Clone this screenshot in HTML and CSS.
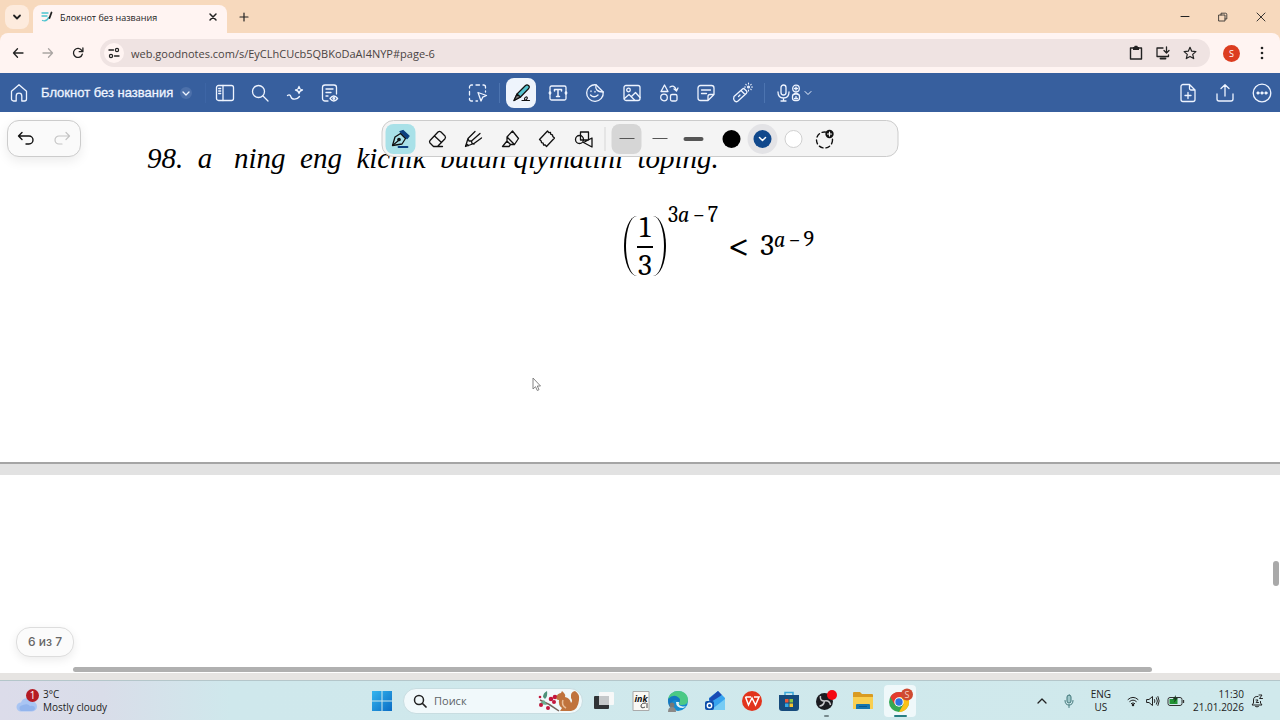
FILE: index.html
```html
<!DOCTYPE html>
<html lang="ru">
<head>
<meta charset="utf-8">
<meta name="viewport" content="width=device-width, initial-scale=1">
<title>Блокнот без названия</title>
<link rel="stylesheet" href="styles.css">
</head>
<body>
<header class="browser">
  <div class="tabstrip">
    <button class="tab-search" aria-label="Search tabs"><svg width="10" height="10" viewBox="0 0 10 10" class="stroke"><path d="M2 3.500 5 6.500 8 3.500" stroke-width="1.800"/></svg></button>
    <div class="tab">
      <svg width="12" height="12" viewBox="0 0 12 12" fill="none" stroke-linecap="round"><path d="M1 2h6M1 5h5" stroke="#4bc3cf" stroke-width="1.300"/><path d="M1.500 9.500c3.500 1 5 0 6-3" stroke="#4bc3cf" stroke-width="1.300"/><path d="M10.500 1.500 8.500 7" stroke="#222" stroke-width="1.800"/></svg>
      <span class="tab-title">Блокнот без названия</span>
      <button class="plain" aria-label="Close tab"><svg width="10" height="10" viewBox="0 0 10 10" class="stroke"><path d="M2 2l6 6M8 2 2 8" stroke-width="1.500"/></svg></button>
    </div>
    <button class="plain new-tab" aria-label="New tab"><svg width="12" height="12" viewBox="0 0 12 12" class="stroke"><path d="M6 2v8M2 6h8" stroke-width="1.200"/></svg></button>
    <div class="window-buttons">
      <button class="plain" aria-label="Minimize"><svg width="10" height="10" viewBox="0 0 10 10" class="stroke"><path d="M1 4.500h8" stroke-width="1"/></svg></button>
      <button class="plain" aria-label="Restore"><svg width="10" height="10" viewBox="0 0 10 10" class="stroke"><path d="M1 3h6v6H1zM3 3V1.200h4.500a1.300 1.300 0 0 1 1.300 1.300V7H7" stroke-width=".8"/></svg></button>
      <button class="plain" aria-label="Close"><svg width="10" height="10" viewBox="0 0 10 10" class="stroke"><path d="M1 1l8 8M9 1 1 9" stroke-width=".9"/></svg></button>
    </div>
  </div>
  <div class="toolbar">
    <button class="plain nav" aria-label="Back"><svg width="12" height="12" viewBox="0 0 12 12" class="stroke"><path d="M11 6H1.500M5.500 1.700 1.500 6l4 4.300" stroke-width="1.300"/></svg></button>
    <button class="plain nav muted" aria-label="Forward"><svg width="12" height="12" viewBox="0 0 12 12" class="stroke"><path d="M1 6h9.500M6.500 1.700l4 4.300-4 4.300" stroke-width="1.300"/></svg></button>
    <button class="plain nav" aria-label="Reload"><svg width="12" height="12" viewBox="0 0 12 12" class="stroke"><path d="M10.300 7.200A4.500 4.500 0 1 1 9.700 3.400L10.700 4.500M10.900 1v3.700H7.200" stroke-width="1.300"/></svg></button>
    <div class="omnibox">
      <button class="site-info" aria-label="Site information"><svg width="12" height="12" viewBox="0 0 12 12" class="stroke"><path d="M1 3h4.500M6.500 9H11" stroke-width="1.400"/><circle cx="9" cy="3" r="1.600" stroke-width="1.200"/><circle cx="3" cy="9" r="1.600" stroke-width="1.200"/></svg></button>
      <input class="url" aria-label="Address" value="web.goodnotes.com/s/EyCLhCUcb5QBKoDaAI4NYP#page-6">
      <button class="plain" aria-label="Clipboard"><svg width="14" height="16" viewBox="0 0 14 16" class="stroke"><path d="M1.500 3h11v11h-11z" stroke-width="1.400"/><path d="M4 2h6v3H4z" fill="currentColor" stroke="none"/><path d="M6 1.500h2" stroke-width="1.500"/></svg></button>
      <button class="plain" aria-label="Install app"><svg width="14" height="14" viewBox="0 0 14 14" class="stroke"><path d="M7 2H1v8.500h11.500V9M10.500 1v5.500M8 4.500 10.500 7 13 4.500" stroke-width="1.300"/><path d="M4.500 12.500h5" stroke-width="1.800"/></svg></button>
      <button class="plain" aria-label="Bookmark"><svg width="14" height="14" viewBox="0 0 14 14" class="stroke"><path d="M7 1.300l1.700 3.900 4.200.4-3.200 2.800 1 4.200L7 10.400l-3.700 2.200 1-4.200L1.100 5.600l4.200-.4z" stroke-width="1.200"/></svg></button>
    </div>
    <button class="avatar" aria-label="Profile">S</button>
    <button class="plain more" aria-label="Menu"><svg width="4" height="14" viewBox="0 0 4 14" fill="currentColor"><circle cx="2" cy="2" r="1.300"/><circle cx="2" cy="7" r="1.300"/><circle cx="2" cy="12" r="1.300"/></svg></button>
  </div>
</header>

<nav class="appbar">
  <div class="app-left">
    <button class="tool home" aria-label="Home"><svg width="20" height="20" viewBox="0 0 20 20" class="stroke"><path d="M2.500 8.300 10 1.800l7.500 6.500V16a2 2 0 0 1-2 2h-2.700v-5a2.800 2.800 0 0 0-5.600 0v5H4.500a2 2 0 0 1-2-2z"/></svg></button>
    <button class="doc-title"><span>Блокнот без названия</span><span class="doc-arrow"><svg width="10" height="10" viewBox="0 0 10 10" class="stroke"><path d="M2 4l3 3 3-3"/></svg></span></button>
    <span class="bar-line faint"></span>
    <div class="app-actions">
      <button class="tool" aria-label="Sidebar"><svg width="20" height="20" viewBox="0 0 20 20" class="stroke"><rect x="1.500" y="2.500" width="17" height="15" rx="2"/><path d="M8 2.500v15M3.700 5.500h2M3.700 8h2M3.700 10.500h2"/></svg></button>
      <button class="tool" aria-label="Search"><svg width="20" height="20" viewBox="0 0 20 20" class="stroke"><circle cx="8.500" cy="8.500" r="6"/><path d="M13 13l5 5"/></svg></button>
      <button class="tool" aria-label="Assistant"><svg width="20" height="20" viewBox="0 0 20 20" class="stroke"><path d="M2.500 12.500c2-1.500 3 0 3.500 1.500 1 3 6 3 8.500-.5M14 3.500q.5 3 3.500 3.500-3 .5-3.500 3.500-.5-3-3.500-3.500 3-.5 3.500-3.500z"/></svg></button>
      <button class="tool" aria-label="Document view"><svg width="20" height="20" viewBox="0 0 20 20" class="stroke"><path d="M8 18H5a2.500 2.500 0 0 1-2.500-2.500v-11A2.500 2.500 0 0 1 5 2h9a2.500 2.500 0 0 1 2.500 2.500V11M6 6h7M6 9.500h5M6 13h2"/><path d="M10 15.500q3.800-5 7.600 0-3.800 5-7.600 0z"/><circle cx="13.800" cy="15.500" r=".8"/></svg></button>
    </div>
  </div>
  <div class="app-center">
    <button class="tool" aria-label="Select"><svg width="20" height="20" viewBox="0 0 20 20" class="stroke"><path d="M1.500 5V4A2 2 0 0 1 3.500 2h1M8 2h3.500M15 2h.5a2 2 0 0 1 2 2v1M1.500 8.500V12M1.500 15.500A2 2 0 0 0 3.500 18h1M8 18h1.500M17.500 8v1"/><path d="M10 9.500l8.500 3-3.800 1.700-1.700 3.800z"/></svg></button>
    <span class="bar-line"></span>
    <div class="mode-list">
      <button class="tool active" aria-label="Pen"><svg width="22" height="22" viewBox="0 0 22 22" class="stroke"><path d="M4 18.500 7 12 15.500 3.500q1.500-1.300 3 0t.2 3L10.500 15z" fill="#55c3cf" stroke-width="1.200"/><path d="M4 18.500 7 12l3.500 3z" fill="#777" stroke-width="1.200"/><path d="M12 18.500h2c4-.5 4-4 2-3.500s-2 3.500 0 3.500h3.500" stroke-width="1.200"/></svg></button>
      <button class="tool" aria-label="Text"><svg width="20" height="20" viewBox="0 0 20 20" class="stroke"><path d="M2 7V4.500a1.500 1.500 0 0 1 1.500-1.500h13A1.500 1.500 0 0 1 18 4.500V7M2 13v2.500A1.500 1.500 0 0 0 3.500 17h13a1.500 1.500 0 0 0 1.500-1.500V13"/><path d="M2 8v4M18 8v4M6.500 8V6.500h7V8M10 6.500v7M8.500 13.500h3" stroke-width="1.500"/><circle cx="2" cy="10" r=".8"/><circle cx="18" cy="10" r=".8"/></svg></button>
      <button class="tool" aria-label="Stickers"><svg width="20" height="20" viewBox="0 0 20 20" class="stroke"><path d="M11 1.800A8.300 8.300 0 1 0 18.200 9z"/><path d="M11 1.800C10 6 12 9 18.200 9M6 8.500v-.7M10 9v-.7M5.500 12q3.500 3.500 7.500 0"/></svg></button>
      <button class="tool" aria-label="Image"><svg width="20" height="20" viewBox="0 0 20 20" class="stroke"><rect x="2" y="2.500" width="16" height="15" rx="2"/><circle cx="6.500" cy="7" r="1.800"/><path d="M2.500 15.500l4.500-4 5.500 5.500M9.500 13.500l4-4 4.500 5"/></svg></button>
      <button class="tool" aria-label="Elements"><svg width="20" height="20" viewBox="0 0 20 20" class="stroke"><path d="M5.500 2 9 8.500H2zM11 4q4-3 6.500 3.500M15 6l2.500 2 1.500-3"/><circle cx="5" cy="14.500" r="3.300"/><rect x="11.500" y="11.500" width="6.500" height="6.500" rx="1.500"/></svg></button>
      <button class="tool" aria-label="Note"><svg width="20" height="20" viewBox="0 0 20 20" class="stroke"><path d="M12 17.500H4.500a2.500 2.500 0 0 1-2.500-2.500V5a2.500 2.500 0 0 1 2.500-2.500h11A2.500 2.500 0 0 1 18 5v6.500zM18 11.500h-4a2 2 0 0 0-2 2v4M5.500 7h9M5.500 10.500h5"/></svg></button>
      <button class="tool" aria-label="Laser pointer"><svg width="22" height="22" viewBox="0 0 22 22" class="stroke"><path d="M2 14.500 10.500 7q1-1 2.200.2l1.800 1.800q1 1 0 2.200L6 19q-2 1.500-3.500-.2T2 14.500zM9 8.500l4 4M6.500 14.500l1.500-1.500"/><path d="M16.500 1v1M16.500 8v1M12.500 5h1M19.500 5h1M13.800 2.300l.5.500M19.200 2.300l-.5.500M19.200 7.700l-.5-.5" stroke-width="1.100"/><circle cx="16.500" cy="5" r=".9"/></svg></button>
    </div>
    <span class="bar-line"></span>
    <button class="tool audio" aria-label="Record audio"><svg width="26" height="20" viewBox="0 0 26 20" class="stroke"><rect x="5" y="2" width="5" height="10" rx="2.500"/><path d="M2 9q0 6 5.500 6T13 9M7.500 15v3M5 18h5"/><circle cx="20" cy="5.500" r="3.300"/><path d="M18.500 5.500h3M20 4v3"/><rect x="16.500" y="11" width="7" height="6.500" rx="2.500"/><path d="M18 11.500q2-3 4 0M20 13.500v2M18.500 15.500h3"/></svg><svg width="10" height="10" viewBox="0 0 10 10" class="stroke"><path d="M2 3.500 5 6.500 8 3.500" stroke-width="1"/></svg></button>
  </div>
  <div class="app-right">
    <button class="tool" aria-label="Add page"><svg width="20" height="20" viewBox="0 0 20 20" class="stroke"><path d="M11.500 1.500H5A2 2 0 0 0 3 3.500v13a2 2 0 0 0 2 2h10a2 2 0 0 0 2-2V7zv4A1.500 1.500 0 0 0 13 7h4M10 9.500v6M7 12.500h6"/></svg></button>
    <button class="tool" aria-label="Share"><svg width="20" height="20" viewBox="0 0 20 20" class="stroke"><path d="M2 11v5a2 2 0 0 0 2 2h12a2 2 0 0 0 2-2v-5M10 13V2M6 5.500 10 1.800l4 3.700"/></svg></button>
    <button class="tool" aria-label="More"><svg width="20" height="20" viewBox="0 0 20 20" class="stroke"><circle cx="10" cy="10" r="8.800"/><g fill="currentColor" stroke-width=".5"><circle cx="6" cy="10" r="1.300"/><circle cx="10" cy="10" r="1.300"/><circle cx="14" cy="10" r="1.300"/></g></svg></button>
  </div>
</nav>

<main class="workspace">
  <section class="page first">
    <p class="question">98.  a   ning  eng  kichik  butun qiymatini  toping.</p>
    <div class="formula">
      <span class="paren left"></span>
      <span class="fraction"><span>1</span><span class="denominator">3</span></span>
      <span class="paren right"></span>
      <span class="exponent high">3<i>a</i><span class="minus">−</span>7</span>
      <span class="less">&lt;</span>
      <span>3</span>
      <span class="exponent"><i>a</i><span class="minus">−</span>9</span>
    </div>
  </section>
  <section class="page second"></section>

  <div class="history">
    <button class="plain" aria-label="Undo"><svg width="18" height="18" viewBox="0 0 18 18" class="stroke"><path d="M1.500 6H12a4 4 0 0 1 0 8H9M5 2.500 1.500 6 5 9.500" stroke-width="1.400"/></svg></button>
    <button class="plain muted" aria-label="Redo"><svg width="18" height="18" viewBox="0 0 18 18" class="stroke"><path d="M16.500 6H6a4 4 0 0 0 0 8h3M13 2.500 16.500 6 13 9.500" stroke-width="1.200"/></svg></button>
  </div>

  <div class="pen-panel">
    <div class="pens">
      <button class="pen chosen" aria-label="Fountain pen"><svg width="20" height="20" viewBox="0 0 20 20" class="stroke"><path d="M9.500 2.500 16.500 9.500l2-2.500L12.500 1.500z" fill="#0b3f7f" stroke="#0b3f7f"/><path d="M2 16.500 4.500 8l5.500-3.500 5 5L11.500 15z"/><path d="M2.500 16l5-4"/><circle cx="8.500" cy="10.500" r="1.200" fill="#111"/><path d="M8 18h9" stroke="#0b3f7f" stroke-width="1.800"/></svg></button>
      <button class="pen" aria-label="Eraser"><svg width="20" height="20" viewBox="0 0 20 20" class="stroke"><path d="M2.500 11.500 10.500 3q1.500-1.300 3 0l4 4q1 1.500 0 2.700L10 17.500H6L2.500 14q-1-1.300 0-2.500zM7 7l7 6.500M6 17.500h9"/></svg></button>
      <button class="pen" aria-label="Pencil"><svg width="20" height="20" viewBox="0 0 20 20" class="stroke"><path d="M11.500 2.500 4.500 9.500 2 17.500l8.500-3 7.500-5.500M8 12l8.500-7.500M4.500 9.500l1 2.500L8 12l.5 2.500 2 .5M3 15l2 1.500"/></svg></button>
      <button class="pen" aria-label="Highlighter"><svg width="20" height="20" viewBox="0 0 20 20" class="stroke"><path d="M12 2 6.500 8v4L2 17.500h6.500l1.500-2h4L18 9.500zM6.500 8l7.500 7.500M6.500 12l3.500 3.500"/></svg></button>
      <button class="pen" aria-label="Tape"><svg width="20" height="20" viewBox="0 0 20 20" class="stroke"><path d="M11 2l1.300 1.700 1.700-.2.300 1.900 1.700.4.300 1.700L18 9l-8 8.500-1.300-1.700-1.700.2-.3-1.900-1.700-.4-.3-1.700L3 10.500z"/></svg></button>
      <button class="pen" aria-label="Shapes"><svg width="20" height="20" viewBox="0 0 20 20" class="stroke"><path d="M7 3h8v8H7zM18.500 9v9L10 13.500z"/><circle cx="6" cy="10.500" r="4"/></svg></button>
    </div>
    <span class="panel-line"></span>
    <div class="widths">
      <button class="pen picked" aria-label="Thin"><span class="line"></span></button>
      <button class="pen" aria-label="Medium"><span class="line"></span></button>
      <button class="pen" aria-label="Thick"><span class="line thick"></span></button>
    </div>
    <div class="colours">
      <button class="pen" aria-label="Black"><span class="dot black"></span></button>
      <button class="pen ring" aria-label="Blue"><span class="dot blue"><svg width="10" height="10" viewBox="0 0 10 10" class="stroke"><path d="M2 3.500 5 6.500 8 3.500" stroke-width="1.500"/></svg></span></button>
      <button class="pen" aria-label="White"><span class="dot white"></span></button>
      <button class="pen" aria-label="Add colour"><svg width="20" height="20" viewBox="0 0 20 20" class="stroke"><circle cx="10" cy="11" r="8" stroke-dasharray="4 3" stroke-width="1.400"/><circle cx="15" cy="5" r="4.200" fill="#111" stroke="none"/><path d="M15 3v4M13 5h4" stroke="#fff" stroke-width="1.200"/></svg></button>
    </div>
  </div>

  <svg class="cursor" width="10" height="15" viewBox="0 0 10 15"><path d="M1 1v11l2.500-2.300L5.300 13.500l1.700-.8-1.700-3.700H8.500z" fill="#fff" stroke="#777" stroke-width=".9"/></svg>
  <div class="page-count">6 из 7</div>
  <div class="scroll-x"></div>
  <div class="scroll-y"></div>
</main>

<footer class="taskbar">
  <button class="weather">
    <svg width="26" height="26" viewBox="0 0 26 26"><path d="M6 23.500a4.500 4.500 0 0 1 0-9 6 6 0 0 1 11-1 5 5 0 0 1 0 10z" fill="#a9c5f3"/><path d="M5 22q-2-4 3-5 5-2 7 1 5-1 5 3-1 2-4 2H6z" fill="#86aaea" opacity=".6"/><circle cx="17.500" cy="7.500" r="6.500" fill="#b51b24"/><text x="17.500" y="11" font-size="10" fill="#fff" text-anchor="middle">1</text></svg>
    <span class="weather-text"><span>3°C</span><span>Mostly cloudy</span></span>
  </button>
  <div class="task-center">
    <button class="task" aria-label="Start"><svg width="20" height="20" viewBox="0 0 20 20"><defs><linearGradient id="win" x1="0" y1="0" x2="1" y2="1"><stop offset="0" stop-color="#35b6ef"/><stop offset="1" stop-color="#0a6cc4"/></linearGradient></defs><path d="M0 0h9.500v9.500H0zM10.500 0H20v9.500h-9.500zM0 10.500h9.500V20H0zM10.500 10.500H20V20h-9.500z" fill="url(#win)"/></svg></button>
    <label class="search"><svg width="14" height="14" viewBox="0 0 14 14" class="stroke"><circle cx="6" cy="6" r="4.500" stroke-width="1.500"/><path d="M9.500 9.500 13 13" stroke-width="1.700"/></svg><input class="search-input" type="text" placeholder="Поиск" aria-label="Поиск"><svg width="42" height="22" viewBox="0 0 42 22"><path d="M2 10Q12 14 21 21" stroke="#75645b" stroke-width="1.500" fill="none"/><path d="M5 7Q5 3 9 1q1 5-2 8z" fill="#4e927a"/><path d="M1 14l5-4 3 5z" fill="#6eaf91"/><g fill="#c3173c"><circle cx="3" cy="15" r="2"/><circle cx="10" cy="18" r="2"/><circle cx="13" cy="9" r="2.300"/><circle cx="17" cy="7" r="2.300"/><circle cx="16" cy="12" r="2"/><circle cx="2" cy="7" r="1.300"/></g><path d="M19 6q0-2 4-3l1-2 2 2q2 2 1 4 5 1 6 6 2-2 0-5-1-6 4-7 5 3 4 9-1 10-8 11H22l2-3q-4-3-3-8-4 0-2-4z" fill="#c0733d"/><path d="M25 10q-2 5 3 8" stroke="#e9bd98" stroke-width="1.500" fill="none"/></svg></label>
    <div class="apps">
      <button class="task" aria-label="Task view"><svg width="20" height="20" viewBox="0 0 20 20"><rect x="5" y="1" width="15" height="13" rx="1" fill="#f7f8f8"/><rect y="5" width="15" height="13" rx="1" fill="#303336"/><path d="M5 5h10v9H5z" fill="#c5c8ca"/></svg></button>
      <button class="task" aria-label="Ink"><svg width="18" height="20" viewBox="0 0 18 20"><path d="M1 .5h16v19H1z" fill="#faf8f4" stroke="#aaa"/><text x="9" y="11" font-size="9" font-style="italic" font-weight="bold" text-anchor="middle" fill="#111">ink</text><path d="M14 12q-5 0-5 3 0 3 4 1M15 12v5" stroke="#444" fill="none"/></svg></button>
      <button class="task" aria-label="Edge"><svg width="22" height="22" viewBox="0 0 22 22"><circle cx="11" cy="11" r="10" fill="#158bd0"/><path d="M1 11C1-2 21-2 21 10q0 5-6 5-3 0-3-2 1-1 1-2 0-4-5-4-5 0-7 4z" fill="#4bc985"/><path d="M1 9q6-6 11-1 2 2 0 4-5-5-8 2l2 6Q1 17 1 9z" fill="#1478c1"/><path d="M9 12q0 6 7 6l4-2q-3 1-6 0-3-1-2-4z" fill="#e3f3f5"/><circle cx="5" cy="15" r="2.500" fill="#777"/><path d="M1 22q0-5 4-5t4 5z" fill="#8b8987"/></svg></button>
      <button class="task" aria-label="Outlook"><svg width="22" height="22" viewBox="0 0 22 22"><path d="M5 8 14 1l6 7v12H5z" fill="#2386dc"/><path d="M5 9 14 1l4 4-9 9z" fill="#1a4bb4"/><path d="M7 12 18 5l3 3v12H6z" fill="#37a4ef"/><path d="M7 20 21 9v11z" fill="#77ccf4"/><rect x="1" y="11" width="9" height="9" rx="2" fill="#0c4eaa"/><circle cx="5.500" cy="15.500" r="2.200" fill="none" stroke="#fff" stroke-width="1.400"/></svg></button>
      <button class="task" aria-label="WPS Office"><svg width="20" height="20" viewBox="0 0 20 20"><circle cx="10" cy="10" r="10" fill="#e2341d"/><path d="M3.500 6l3 8L10 7l3.500 7L17 6h-5M3.500 6H9" fill="none" stroke="#fff" stroke-width="1.500"/></svg></button>
      <button class="task" aria-label="Store"><svg width="20" height="20" viewBox="0 0 20 20"><path d="M6 5V1.500h8V5" fill="none" stroke="#39a8db" stroke-width="1.500"/><path d="M0 4h20v13a3 3 0 0 1-3 3H3a3 3 0 0 1-3-3z" fill="#164b7c"/><path d="M6 8h3.500v3.500H6z" fill="#ee5637"/><path d="M10.500 8H14v3.500h-3.500z" fill="#8bc343"/><path d="M6 12.500h3.500V16H6z" fill="#35a9e5"/><path d="M10.500 12.500H14V16h-3.500z" fill="#f7c531"/></svg></button>
      <button class="task running" aria-label="OBS Studio"><svg width="22" height="22" viewBox="0 0 22 22"><circle cx="9.500" cy="11.500" r="8.500" fill="#1b1b20"/><path d="M9.500 11q-5 0-4-5M9.500 11q5-1 6 4M9.500 11q-1 5-5 5" fill="none" stroke="#c8c8cc" stroke-width="1.500"/><circle cx="17" cy="5" r="5" fill="#f50812"/></svg></button>
      <button class="task" aria-label="File Explorer"><svg width="20" height="20" viewBox="0 0 20 20"><path d="M0 2q0-1 1-1h6l2 2h10q1 0 1 1v5H0z" fill="#d99b22"/><path d="M0 6h20v12H0z" fill="#f9cf51"/><path d="M3 18v-4q0-1 1-1h12q1 0 1 1v4z" fill="#1675ae"/><path d="M6 15.500h8" stroke="#0b588d"/></svg></button>
      <button class="task current" aria-label="Google Chrome"><svg width="26" height="28" viewBox="0 0 26 28"><circle cx="12" cy="15" r="10" fill="#34a853"/><path d="M3.300 10A10 10 0 0 1 20.700 10H12l-4.400 7.500z" fill="#e33b2e"/><path d="M20.700 10A10 10 0 0 1 12 25l4.400-7.500L12 10z" fill="#fbc116"/><circle cx="12" cy="15" r="4.700" fill="#fff"/><circle cx="12" cy="15" r="3.700" fill="#2d73e1"/><circle cx="20" cy="7.500" r="6" fill="#cf4a31"/><text x="20" y="11" font-size="9" fill="#f3cfc5" text-anchor="middle">S</text></svg></button>
    </div>
  </div>
  <div class="tray">
    <button class="plain" aria-label="Hidden icons"><svg width="10" height="10" viewBox="0 0 10 10" class="stroke"><path d="M1 7l4-4 4 4"/></svg></button>
    <button class="plain mic" aria-label="Microphone"><svg width="10" height="14" viewBox="0 0 10 14" class="stroke"><rect x="3" y="1" width="4" height="8" rx="2" fill="#9dc7c9" stroke-width="1"/><path d="M1 6.500q0 4.500 4 4.500t4-4.500M5 11v2.500" stroke-width="1"/></svg></button>
    <button class="language"><span>ENG</span><span>US</span></button>
    <div class="status">
      <svg width="12" height="12" viewBox="0 0 12 12" class="stroke"><path d="M1 4.500q5-4.500 10 0M2.700 6.500q3.300-3 6.600 0M4.300 8.500q1.700-1.500 3.400 0" stroke-width="1"/><circle cx="6" cy="10" r=".6"/></svg>
      <svg width="14" height="12" viewBox="0 0 14 12" class="stroke"><path d="M1 4.500h2L6.500 1.500v9L3 7.500H1zM8.500 4.500q1 1.500 0 3M10.500 2.800q2 3.200 0 6.400M12 1.500q2.500 4.500 0 9" stroke-width="1"/></svg>
      <svg width="18" height="12" viewBox="0 0 18 12"><rect x="1" y="2.500" width="14" height="8" rx="2" fill="none" stroke="#333"/><path d="M2.500 4h8v5h-8z" fill="#239435"/><path d="M16.500 5v3" stroke="#333" stroke-width="1.300"/><path d="M9 0 5.500 4.500H8L6.500 8 11 3H8.500z" fill="#173c1e"/></svg>
    </div>
    <button class="clock"><span>11:30</span><span>21.01.2026</span></button>
    <button class="plain" aria-label="Notifications"><svg width="12" height="14" viewBox="0 0 12 14" class="stroke"><path d="M7 2.500Q2.500 2 2.500 6v3L1 11h10L9.500 9V7.500M4.500 12.500q1.500 1 3 0M8 1h3L8.500 4.500h3M5 6h2L5.200 8.500H7.500" stroke-width="1"/></svg></button>
  </div>
</footer>
</body>
</html>
```
FILE: styles.css
```css
* { box-sizing: border-box; }

body {
  margin: 0;
  height: 100vh;
  display: flex;
  flex-direction: column;
  overflow: hidden;
  background: #fff;
  color: #222;
  font-family: "Open Sans", "Noto Sans", sans-serif;
  font-size: 11px;
}

button, input {
  margin: 0;
  padding: 0;
  border: 0;
  background: none;
  color: inherit;
  font: inherit;
}

svg { display: block; flex: none; }

.stroke {
  fill: none;
  stroke: currentColor;
  stroke-width: 1.3;
  stroke-linecap: round;
  stroke-linejoin: round;
}

.plain, .tool, .pen, .task, .site-info, .avatar, .tab-search {
  display: flex;
  align-items: center;
  justify-content: center;
  flex: none;
}

/* Browser frame */
.browser { background: #f7d9bd; }

.tabstrip {
  display: flex;
  align-items: center;
  height: 33px;
  padding-left: 5px;
}

.tab-search {
  width: 24px;
  height: 24px;
  border-radius: 8px;
  background: #fdebdd;
}

.tab {
  display: flex;
  align-items: center;
  align-self: flex-end;
  width: 194px;
  height: 28px;
  margin-left: 4px;
  padding: 0 9px 4px 8px;
  border-radius: 8px 8px 0 0;
  background: #fff4f2;
}

.tab-title { flex: 1; margin-left: 7px; font-size: 9px; white-space: nowrap; }
.new-tab { margin-left: 11px; }

.window-buttons {
  display: flex;
  gap: 28px;
  margin-left: auto;
  padding-right: 14px;
}

.toolbar {
  display: flex;
  align-items: center;
  height: 40px;
  padding: 0 12px;
  border-radius: 8px 8px 0 0;
  background: #fff4f2;
}

.nav { width: 12px; margin-right: 18px; }
.muted { color: #aaa5a3; }

.omnibox {
  display: flex;
  align-items: center;
  flex: 1;
  gap: 13px;
  height: 28px;
  margin-left: -2px;
  padding: 0 13px 0 4px;
  border-radius: 14px;
  background: #efe3e2;
}

.site-info {
  width: 20px;
  height: 20px;
  border-radius: 10px;
  background: #fff4f2;
}

.url { flex: 1; min-width: 0; margin-left: -6px; font-size: 11px; color: #4a4342; }

.avatar {
  width: 17px;
  height: 17px;
  margin-left: 13px;
  border-radius: 50%;
  background: #dc3d20;
  color: #fff;
  font-size: 9px;
}

.more { margin: 0 4px 0 20px; }

/* Application bar */
.appbar {
  display: grid;
  grid-template-columns: 1fr auto 1fr;
  align-items: center;
  height: 39px;
  background: #375f9e;
  color: #eef4ff;
}

.tool { width: 30px; height: 30px; border-radius: 8px; }
.app-left, .app-center, .app-right, .mode-list, .app-actions { display: flex; align-items: center; }
.app-left { padding-left: 4px; }
.app-actions { gap: 5px; margin-left: 4px; }
.app-center { gap: 6px; }
.mode-list { gap: 7px; }
.app-right { justify-content: flex-end; gap: 7px; padding-right: 3px; }

.doc-title {
  display: flex;
  align-items: center;
  gap: 7px;
  margin: 0 13px 0 7px;
  font-family: "Liberation Sans", Arial, sans-serif;
  font-size: 13px;
  -webkit-text-stroke: 0.3px currentColor;
  white-space: nowrap;
}

.doc-arrow { padding: 1px; border-radius: 50%; background: #4c70aa; }
.bar-line { width: 1px; height: 20px; background: #4c74b0; }
.bar-line.faint { background: #3d65a5; }
.tool.active { background: #eef4fc; color: #111; }
.tool.audio { width: 46px; gap: 1px; }

/* Document */
.workspace {
  position: relative;
  flex: 1;
  display: flex;
  flex-direction: column;
  gap: 11px;
  min-height: 0;
  overflow: hidden;
  background: #e2e2e2;
  border-bottom: 7px solid #e6e4e2;
}

.page { background: #fff; }

.first {
  padding-top: 29px;
  height: 352px;
  border-bottom: 2px solid #a5a5a5;
  color: #000;
  font-family: "Liberation Serif", "Times New Roman", serif;
}

.second { flex: 1; }

.question {
  margin: 0 0 0 147px;
  font-size: 29px;
  font-style: italic;
  line-height: 34px;
  white-space: pre;
}

.formula {
  display: flex;
  align-items: center;
  justify-content: center;
  margin-top: 28px;
  padding-left: 158px;
  font-family: Cambria, Caladea, "Liberation Serif", serif;
  font-size: 30px;
  line-height: 40px;
}

.paren { width: 13px; height: 60px; }
.paren.left { border-left: 2px solid #000; border-radius: 100% 0 0 100% / 50% 0 0 50%; }
.paren.right { border-right: 2px solid #000; border-radius: 0 100% 100% 0 / 0 50% 50% 0; }
.fraction { display: flex; flex-direction: column; width: 16px; text-align: center; line-height: 36px; }
.fraction > span { height: 36px; }
.denominator { border-top: 2px solid #000; }
.exponent { font-size: 22px; line-height: 24px; padding-bottom: 12px; }
.exponent.high { padding-bottom: 62px; margin-left: 2px; }
.minus { margin: 0 3px; }
.less { margin: 0 10px; font-size: 40px; }

/* Floating panels */
.history, .pen-panel {
  position: absolute;
  top: 8px;
  display: flex;
  align-items: center;
  height: 37px;
  border: 1px solid #ccc;
  border-radius: 12px;
  background: #f4f4f4;
}

.history {
  left: 7px;
  gap: 18px;
  padding: 0 9px;
  background: #fafafa;
  color: #111;
  box-shadow: 0 4px 12px rgba(0, 0, 0, 0.08);
}

.history .muted { color: #c4c4c4; }

.pen-panel {
  left: 50%;
  width: 517px;
  padding: 0 3px;
  transform: translateX(-50%);
  color: #111;
}

.pens, .widths, .colours { display: flex; justify-content: space-between; }
.pens { width: 213px; }
.panel-line { width: 1px; height: 24px; margin: 0 6px; background: #d5d5d5; }
.widths { width: 97px; margin-right: 8px; }
.colours { gap: 1px; }
.pen { width: 30px; height: 30px; border-radius: 8px; }
.chosen { background: #a9e1e8; }
.picked { background: #d6d6d6; }
.ring { border-radius: 50%; background: #e3e3e6; }
.line { width: 15px; height: 1px; background: #555; }
.line.thick { width: 20px; height: 4px; border-radius: 2px; background: #555; }
.dot { display: flex; align-items: center; justify-content: center; width: 18px; height: 18px; border-radius: 50%; color: #fff; }
.black { background: #000; }
.blue { background: #10488c; }
.white { background: #fff; border: 1px solid #d0d0d0; }

.cursor { position: absolute; left: 532px; top: 265px; }

.page-count {
  position: absolute;
  left: 16px;
  bottom: 16px;
  padding: 0 11px;
  border: 1px solid #ddd;
  border-radius: 14px;
  background: #fbfbfb;
  box-shadow: 0 3px 10px rgba(0, 0, 0, 0.08);
  color: #666;
  font-family: Inter, sans-serif;
  font-size: 12px;
  font-weight: 500;
  line-height: 28px;
}

.scroll-x {
  position: absolute;
  left: 73px;
  right: 128px;
  bottom: 1px;
  height: 5px;
  border-radius: 3px;
  background: #b0b0b0;
}

.scroll-y {
  position: absolute;
  right: 1px;
  top: 80%;
  width: 6px;
  height: 25px;
  border-radius: 3px;
  background: #a9a9a9;
}

/* Taskbar */
.taskbar {
  display: grid;
  grid-template-columns: 1fr auto 1fr;
  align-items: center;
  height: 40px;
  border-top: 1px solid #b4c6ca;
  background: linear-gradient(90deg, #dcdcea 0, #d9dde9 8%, #cfe8ec 18%, #d0e9ec 100%);
}

.weather { display: flex; align-items: center; padding-left: 15px; gap: 2px; text-align: left; }
.weather-text, .language, .clock { display: flex; flex-direction: column; font-size: 10px; line-height: 13px; }
.task-center, .apps { display: flex; align-items: center; gap: 5px; }
.task-center { padding-left: 2px; }

.task {
  position: relative;
  width: 32px;
  height: 32px;
  border-radius: 4px;
}

.task.current { background: #eff8fa; }

.task.running::after, .task.current::after {
  content: "";
  position: absolute;
  bottom: 0;
  width: 5px;
  height: 2px;
  border-radius: 1px;
  background: #76898c;
}

.task.current::after { width: 13px; background: #277e84; }

.search {
  display: flex;
  align-items: center;
  width: 180px;
  height: 26px;
  padding: 0 2px 0 9px;
  border: 1px solid #c8dde1;
  border-radius: 13px;
  background: #f1f9fb;
}

.search-input { flex: 1; min-width: 0; margin-left: 7px; font-size: 11px; }
.search-input::placeholder { color: #5c6366; opacity: 1; }

.tray { display: flex; align-items: center; justify-content: flex-end; padding-right: 17px; }
.mic { margin-left: 17px; color: #41777a; }
.language { align-items: center; margin-left: 17px; }
.status { display: flex; align-items: center; gap: 7px; margin: 0 8px 0 16px; }
.clock { align-items: flex-end; margin-right: 7px; }
```
